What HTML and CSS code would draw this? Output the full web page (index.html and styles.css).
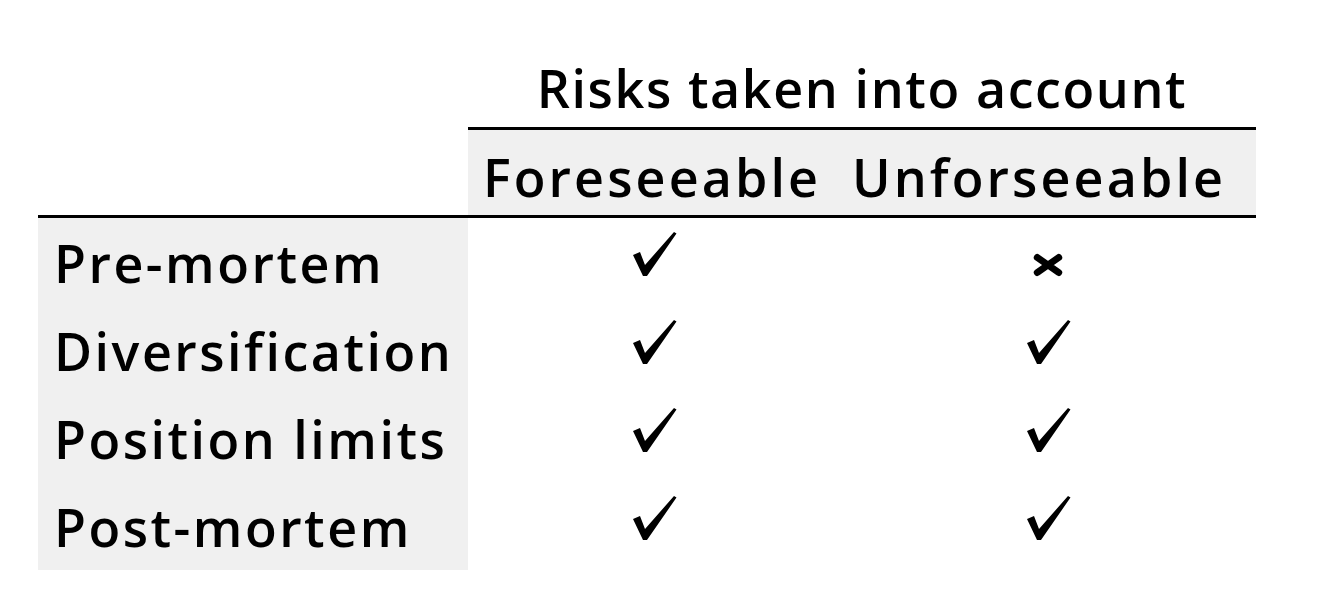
FILE: index.html
```html
<!DOCTYPE html>
<html lang="en">
<head>
<meta charset="utf-8">
<title>Risks taken into account</title>
<link rel="stylesheet" href="styles.css">
</head>
<body>
<div class="table">
  <div class="cell blank-top"></div>
  <div class="cell title">Risks taken into account</div>

  <div class="cell head-blank"></div>
  <div class="cell head">Foreseeable</div>
  <div class="cell head">Unforseeable</div>

  <div class="cell label">Pre-mortem</div>
  <div class="cell mark"><svg class="check" viewBox="0 0 44 44"><path d="M0 23 L7 20 L12 33 L41 0 L43.5 1.5 L14 44 L10 44 Z"/></svg></div>
  <div class="cell mark mid"><svg class="cross" viewBox="0 0 28 22"><path d="M4 4 L24 18 M24 4 L4 18"/></svg></div>

  <div class="cell label">Diversification</div>
  <div class="cell mark"><svg class="check" viewBox="0 0 44 44"><path d="M0 23 L7 20 L12 33 L41 0 L43.5 1.5 L14 44 L10 44 Z"/></svg></div>
  <div class="cell mark"><svg class="check" viewBox="0 0 44 44"><path d="M0 23 L7 20 L12 33 L41 0 L43.5 1.5 L14 44 L10 44 Z"/></svg></div>

  <div class="cell label">Position limits</div>
  <div class="cell mark"><svg class="check" viewBox="0 0 44 44"><path d="M0 23 L7 20 L12 33 L41 0 L43.5 1.5 L14 44 L10 44 Z"/></svg></div>
  <div class="cell mark"><svg class="check" viewBox="0 0 44 44"><path d="M0 23 L7 20 L12 33 L41 0 L43.5 1.5 L14 44 L10 44 Z"/></svg></div>

  <div class="cell label">Post-mortem</div>
  <div class="cell mark"><svg class="check" viewBox="0 0 44 44"><path d="M0 23 L7 20 L12 33 L41 0 L43.5 1.5 L14 44 L10 44 Z"/></svg></div>
  <div class="cell mark"><svg class="check" viewBox="0 0 44 44"><path d="M0 23 L7 20 L12 33 L41 0 L43.5 1.5 L14 44 L10 44 Z"/></svg></div>
</div>
</body>
</html>
```

FILE: styles.css
```css
html, body {
  margin: 0;
  padding: 0;
  background: #ffffff;
}

body {
  font-family: "Open Sans", Lato, "Liberation Sans", sans-serif;
  color: #000000;
}

.table {
  display: grid;
  grid-template-columns: 430px 368px 420px;
  margin-left: 38px;
  width: 1218px;
}

.cell {
  font-size: 52px;
  font-weight: 600;
  line-height: 60px;
  white-space: nowrap;
  letter-spacing: 2.5px;
}

.blank-top {
  height: 127px;
}

.title {
  grid-column: 2 / span 2;
  display: flex;
  align-items: flex-end;
  justify-content: center;
  letter-spacing: 1.6px;
  padding-bottom: 9px;
  height: 118px;
  border-bottom: 3px solid #000000;
}

.head-blank,
.head {
  border-bottom: 3px solid #000000;
  padding-top: 17px;
  padding-bottom: 8px;
}

.head {
  background: #f0f0f0;
  text-align: center;
  letter-spacing: 3.1px;
}

.head + .head {
  padding-right: 14px;
}

.label {
  background: #f0f0f0;
  padding: 15px 0 13px 16px;
}

.mark {
  height: 88px;
  display: flex;
  justify-content: center;
  align-items: flex-start;
  padding-top: 14px;
  box-sizing: border-box;
}

.mark.mid {
  align-items: center;
  padding-top: 6px;
}

.check {
  width: 44px;
  height: 44px;
  fill: #000000;
  margin-left: 6px;
}

.cross {
  width: 30px;
  height: 24px;
  fill: none;
  stroke: #000000;
  stroke-width: 6.5;
  stroke-linecap: round;
  margin-left: 4px;
}
```
